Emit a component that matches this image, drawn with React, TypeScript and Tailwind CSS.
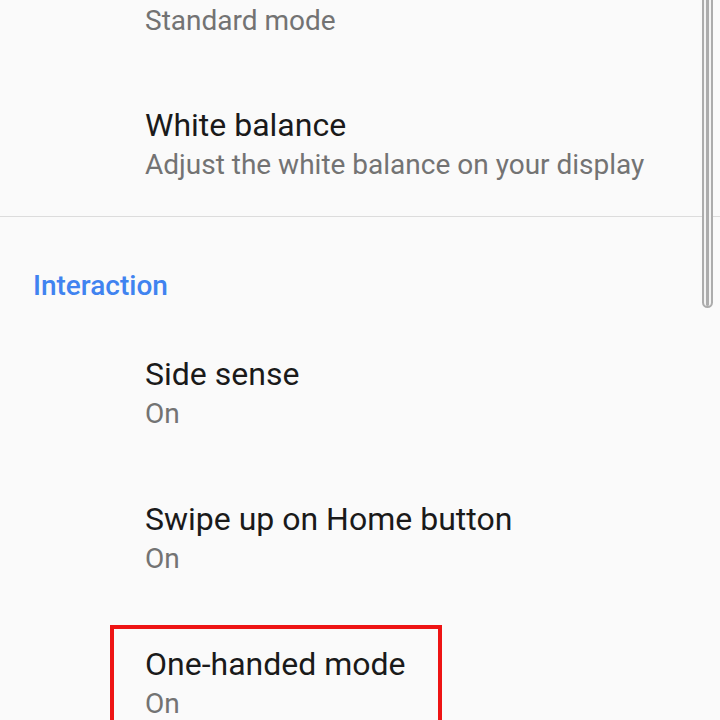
import React from "react";

type Item = { title: string; summary: string };

const interaction: Item[] = [
  { title: "Side sense", summary: "On" },
  { title: "Swipe up on Home button", summary: "On" },
];

function Row({ title, summary }: Item) {
  return (
    <div className="pl-[145px] pt-[32px] pb-[33px]">
      <div className="text-[32px] leading-[40px] text-[#1a1a1a]">{title}</div>
      <div className="text-[28px] leading-[40px] text-[#737373]">{summary}</div>
    </div>
  );
}

export default function App() {
  return (
    <div
      className="relative w-[720px] h-[720px] overflow-hidden bg-[#fafafa]"
      style={{ fontFamily: "Roboto, 'Noto Sans', sans-serif" }}
    >
      {/* tail of the previous item, title scrolled off */}
      <div className="pl-[145px] pt-[1px] pb-[32px]">
        <div className="text-[28px] leading-[40px] text-[#737373]">Standard mode</div>
      </div>

      <div className="pl-[145px] pt-[32px] pb-[31px]">
        <div className="text-[32px] leading-[40px] text-[#1a1a1a]">White balance</div>
        <div className="text-[28px] leading-[40px] text-[#737373]">
          Adjust the white balance on your display
        </div>
      </div>

      <div className="h-px bg-[#dcdcdc]" />

      {/* Interaction section */}
      <div className="pl-[33px] pt-[50px] pb-[17px] text-[28px] leading-[38px] font-medium text-[#4083f0]">
        Interaction
      </div>

      {interaction.map((item) => (
        <Row key={item.title} {...item} />
      ))}

      <div className="pl-[110px] pt-[13px]">
        <div className="w-[332px] border-4 border-[#ee1414] pl-[31px] pt-[15px] pb-[20px]">
          <div className="text-[32px] leading-[40px] text-[#1a1a1a]">One-handed mode</div>
          <div className="text-[28px] leading-[40px] text-[#737373]">On</div>
        </div>
      </div>

      {/* scrollbar */}
      <div className="absolute right-[7px] top-[-12px] w-[11px] h-[320px] rounded-b-full border-2 border-[#acacac] bg-[#f3f3f3] flex justify-center">
        <div className="w-[3px] h-full rounded-b-full bg-[#acacac]" />
      </div>
    </div>
  );
}
